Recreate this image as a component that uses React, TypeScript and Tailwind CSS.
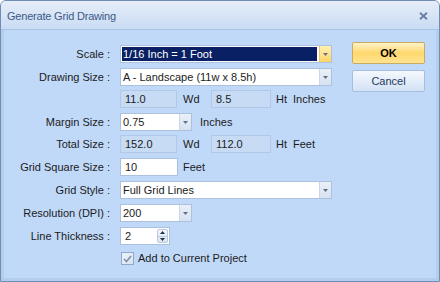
const font = { fontFamily: '"Liberation Sans", Arial, sans-serif' };

const Arrow = () => (
  <svg width="5" height="3" viewBox="0 0 5 3">
    <polygon points="0,0 5,0 2.5,3" fill="#5e6f88" />
  </svg>
);

const Combo = ({ className, text, selected, hot }: { className: string; text: string; selected?: boolean; hot?: boolean }) => (
  <div className={`flex h-[18px] border border-[#abc1de] bg-white ${className}`}>
    <div className="flex flex-1 p-[1px] pr-[2px]">
      <div className={`flex flex-1 items-center pl-[1px] ${selected ? "bg-[#0a2064] text-white" : ""}`}>{text}</div>
    </div>
    <div
      className={`flex w-[12px] items-center justify-center border-l ${
        hot
          ? "border-[#e9c86e] bg-gradient-to-b from-[#fff0b4] to-[#fdd461]"
          : "border-[#c9d7eb] bg-gradient-to-b from-[#eaf0f8] to-[#d7e2f1]"
      }`}
    >
      <Arrow />
    </div>
  </div>
);

const ReadBox = ({ className, text }: { className: string; text: string }) => (
  <div className={`flex h-[18px] items-center border border-[#b1c8e7] bg-[#c8dbf5] pl-[4px] ${className}`}>{text}</div>
);

const Label = ({ text }: { text?: string }) => (
  <div className="w-[106px] mr-[10px] text-right whitespace-nowrap">{text ? `${text} :` : ""}</div>
);

export default function App() {
  return (
    <div
      style={font}
      className="flex h-[282px] w-[440px] flex-col overflow-hidden rounded-t-[6px] border border-[#6f8cb5] bg-[#c1d9f8] text-[11px] text-[#1b1b1b]"
    >
      {/* title bar */}
      <div className="flex h-[29px] shrink-0 items-center justify-between border-b border-[#a9c3e4] bg-gradient-to-b from-[#e6eef9] to-[#c9dcf3] pl-[6px] pr-[11px] pt-[2px]">
        <span className="tracking-[-0.2px] text-[#3d5a86]">Generate Grid Drawing</span>
        <svg width="9" height="8" viewBox="0 0 9 8">
          <path d="M1 0.8 L8 7.2 M8 0.8 L1 7.2" stroke="#6a80a2" strokeWidth="1.9" />
        </svg>
      </div>

      {/* body */}
      <div className="flex flex-1 border-x-[3px] border-b-[3px] border-[#b5cdec]">
        <div className="flex w-[328px] flex-col pt-[15px]">
          <div className="flex h-[18px] items-center">
            <Label text="Scale" />
            <Combo className="w-[212px]" text="1/16 Inch = 1 Foot" selected hot />
          </div>
          <div className="mt-[5px] flex h-[18px] items-center">
            <Label text="Drawing Size" />
            <Combo className="w-[212px]" text="A - Landscape (11w x 8.5h)" />
          </div>
          <div className="mt-[4px] flex h-[18px] items-center">
            <Label />
            <ReadBox className="w-[57px]" text="11.0" />
            <span className="w-[34px] pl-[6px]">Wd</span>
            <ReadBox className="w-[60px]" text="8.5" />
            <span className="ml-[5px]">Ht</span>
            <span className="ml-[6px]">Inches</span>
          </div>
          <div className="mt-[5px] flex h-[18px] items-center">
            <Label text="Margin Size" />
            <Combo className="w-[72px]" text="0.75" />
            <span className="ml-[8px]">Inches</span>
          </div>
          <div className="mt-[4px] flex h-[18px] items-center">
            <Label text="Total Size" />
            <ReadBox className="w-[57px]" text="152.0" />
            <span className="w-[34px] pl-[6px]">Wd</span>
            <ReadBox className="w-[60px]" text="112.0" />
            <span className="ml-[5px]">Ht</span>
            <span className="ml-[6px]">Feet</span>
          </div>
          <div className="mt-[5px] flex h-[18px] items-center">
            <Label text="Grid Square Size" />
            <div className="flex h-[18px] w-[58px] items-center border border-[#abc1de] bg-white pl-[4px]">10</div>
            <span className="ml-[5px]">Feet</span>
          </div>
          <div className="mt-[5px] flex h-[18px] items-center">
            <Label text="Grid Style" />
            <Combo className="w-[212px]" text="Full Grid Lines" />
          </div>
          <div className="mt-[5px] flex h-[18px] items-center">
            <Label text="Resolution (DPI)" />
            <Combo className="w-[72px]" text="200" />
          </div>
          <div className="mt-[5px] flex h-[18px] items-center">
            <Label text="Line Thickness" />
            <div className="flex h-[18px] w-[50px] border border-[#abc1de] bg-white">
              <div className="flex flex-1 items-center pl-[4px]">2</div>
              <div className="my-[1px] mr-[1px] flex w-[11px] flex-col rounded-[2px] border border-[#b8c9e0] bg-gradient-to-b from-[#f3f6fb] to-[#dbe4f1]">
                <div className="flex flex-1 items-center justify-center border-b border-[#b8c9e0]">
                  <svg width="5" height="3" viewBox="0 0 5 3">
                    <polygon points="0,3 5,3 2.5,0" fill="#1f2f47" />
                  </svg>
                </div>
                <div className="flex flex-1 items-center justify-center">
                  <svg width="5" height="3" viewBox="0 0 5 3">
                    <polygon points="0,0 5,0 2.5,3" fill="#1f2f47" />
                  </svg>
                </div>
              </div>
            </div>
          </div>
          <div className="mt-[6px] flex h-[15px] items-center">
            <div className="ml-[117px] flex h-[13px] w-[13px] items-center justify-center border border-[#8fa9ca] bg-gradient-to-br from-[#eef3fa] to-[#d7e2f0]">
              <svg width="9" height="8" viewBox="0 0 9 8">
                <path d="M1 4 L3.5 6.5 L8 1" stroke="#7f90ab" strokeWidth="1.6" fill="none" />
              </svg>
            </div>
            <span className="ml-[4px]">Add to Current Project</span>
          </div>
        </div>

        <div className="ml-[20px] flex w-[73px] flex-col pt-[12px]">
          <button className="flex h-[22px] items-center justify-center rounded-[2px] border border-[#c8aa62] bg-gradient-to-b from-[#fff3c6] via-[#ffd86c] to-[#ffe391] font-bold text-black">
            OK
          </button>
          <button className="mt-[6px] flex h-[22px] items-center justify-center rounded-[2px] border border-[#a5bfe1] bg-gradient-to-b from-[#f5f8fd] to-[#d3e2f5] text-[#1d3a62]">
            Cancel
          </button>
        </div>
      </div>
    </div>
  );
}
